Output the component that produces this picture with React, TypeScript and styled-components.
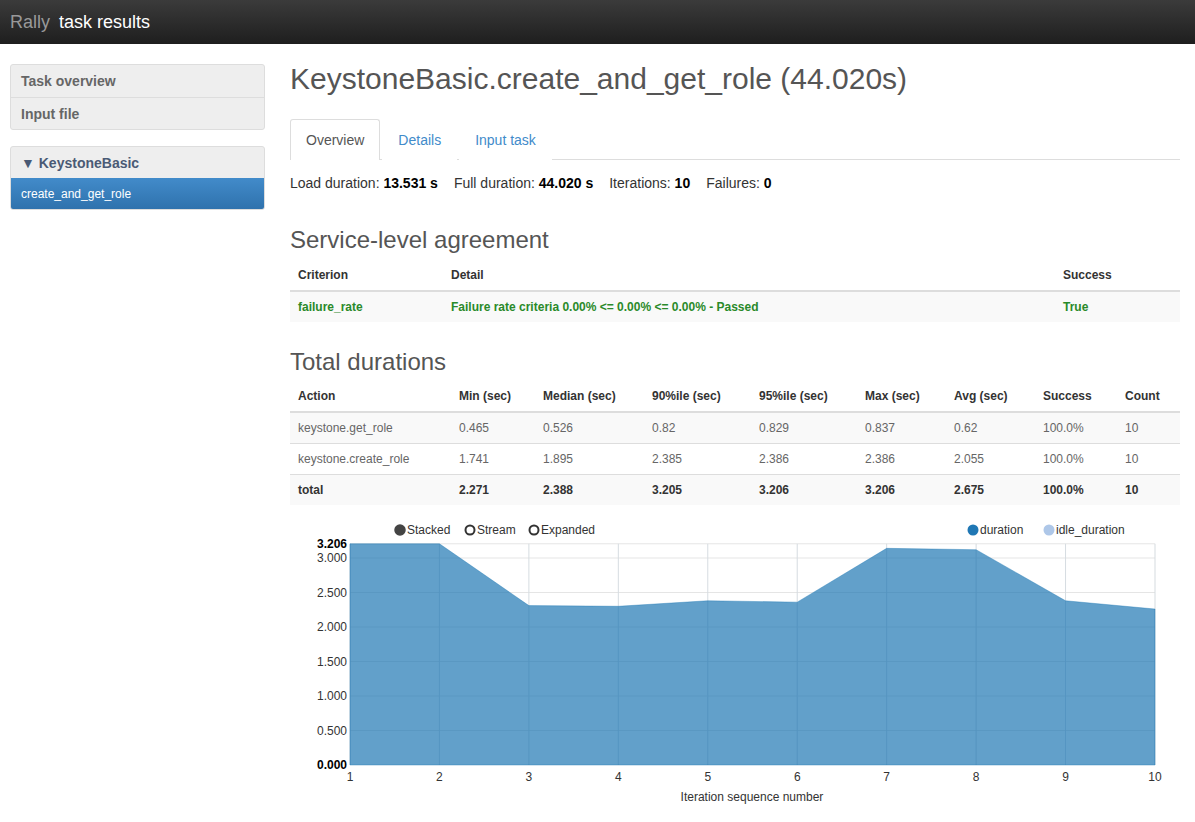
import React from 'react';
import styled, { createGlobalStyle } from 'styled-components';

const GlobalStyle = createGlobalStyle`
  body {
    margin: 0;
    font-family: "Liberation Sans", Arial, sans-serif;
    font-size: 13px;
    color: #333;
    background: #fff;
  }
`;

const TopBar = styled.div`
  height: 44px;
  display: flex;
  align-items: center;
  padding: 0 10px;
  background: linear-gradient(to bottom, #3b3b3b, #1e1e1e);
  font-size: 18px;
`;

const Brand = styled.span`
  color: #999;
  margin-right: 9px;
`;

const BrandTitle = styled.span`
  color: #fff;
`;

const Layout = styled.div`
  display: flex;
  align-items: flex-start;
`;

const Sidebar = styled.div`
  width: 255px;
  margin: 20px 0 0 10px;
  display: flex;
  flex-direction: column;
  gap: 16px;
`;

const MenuPanel = styled.div`
  background: #eee;
  border: 1px solid #ddd;
  border-radius: 3px;
  overflow: hidden;
`;

const MenuItem = styled.div<{ $first?: boolean }>`
  box-sizing: border-box;
  height: 32px;
  display: flex;
  align-items: center;
  padding: 0 10px;
  font-size: 14px;
  font-weight: bold;
  color: #666;
  border-top: ${p => (p.$first ? 'none' : '1px solid #ddd')};
`;

const GroupTitle = styled(MenuItem)`
  height: 31px;
  color: #4a5a75;
`;

const ActiveItem = styled.div`
  height: 31px;
  display: flex;
  align-items: center;
  padding: 0 10px;
  font-size: 12px;
  color: #fff;
  background: linear-gradient(to bottom, #428bca, #2f72ad);
`;

const Main = styled.div`
  width: 890px;
  margin-left: 25px;
`;

const Title = styled.h1`
  margin: 18px 0 23px;
  font-size: 30px;
  line-height: 34px;
  font-weight: normal;
  color: #555;
`;

const Tabs = styled.div`
  display: flex;
  height: 40px;
  border-bottom: 1px solid #ddd;
`;

const Tab = styled.div<{ $active?: boolean }>`
  display: flex;
  align-items: center;
  padding: 0 15px;
  margin-right: 2px;
  font-size: 14px;
  color: ${p => (p.$active ? '#555' : '#428bca')};
  background: #fff;
  border: 1px solid ${p => (p.$active ? '#ddd' : 'transparent')};
  border-bottom: none;
  border-radius: 3px 3px 0 0;
  margin-bottom: -1px;
  height: 41px;
  box-sizing: border-box;
`;

const Summary = styled.div`
  margin-top: 13px;
  font-size: 14px;
  line-height: 20px;
  color: #333;
`;

const SummaryItem = styled.span`
  margin-right: 16px;
  b {
    color: #000;
  }
`;

const Heading = styled.h2<{ $top: number; $bottom: number }>`
  margin: ${p => p.$top}px 0 ${p => p.$bottom}px;
  font-size: 24px;
  line-height: 26px;
  font-weight: normal;
  color: #555;
`;

const Table = styled.table`
  width: 100%;
  border-collapse: collapse;
  table-layout: fixed;
  font-size: 12px;
`;

const Th = styled.th`
  text-align: left;
  font-weight: bold;
  color: #333;
  padding: 6px 8px 7px;
  line-height: 16px;
  border-bottom: 2px solid #ddd;
`;

const Row = styled.tr<{ $striped?: boolean; $bold?: boolean }>`
  background: ${p => (p.$striped ? '#f9f9f9' : '#fff')};
  font-weight: ${p => (p.$bold ? 'bold' : 'normal')};
  td {
    padding: 7px 8px;
    line-height: 16px;
    border-top: 1px solid #ddd;
    color: ${p => (p.$bold ? '#333' : '#666')};
  }
`;

const PassRow = styled.tr`
  background: #f9f9f9;
  td {
    padding: 7px 8px;
    line-height: 16px;
    color: #2a8a2a;
    font-weight: bold;
  }
`;

const ChartBox = styled.div`
  margin-top: 10px;
`;

const durations = [3.206, 3.206, 2.31, 2.3, 2.38, 2.36, 3.14, 3.12, 2.38, 2.26];

const Chart: React.FC = () => {
  const left = 60;
  const right = 865;
  const base = 250;
  const scale = 69;
  const top = base - 3.206 * scale;
  const xs = durations.map((_, i) => left + (i * (right - left)) / 9);
  const ys = durations.map(v => base - v * scale);
  const line = xs.map((x, i) => `${x},${ys[i]}`).join(' L');
  const area = `M${left},${base} L${line} L${right},${base} Z`;
  const ticks = [0.5, 1, 1.5, 2, 2.5, 3];

  return (
    <svg width={890} height={296} fontFamily='"Liberation Sans", Arial, sans-serif' fontSize={12}>
      <g>
        <circle cx={110} cy={15} r={5} fill="#444" stroke="#444" strokeWidth={1.5} />
        <text x={117} y={19} fill="#333">Stacked</text>
        <circle cx={180} cy={15} r={4.5} fill="#fff" stroke="#333" strokeWidth={2} />
        <text x={187} y={19} fill="#333">Stream</text>
        <circle cx={244} cy={15} r={4.5} fill="#fff" stroke="#333" strokeWidth={2} />
        <text x={251} y={19} fill="#333">Expanded</text>
        <circle cx={683} cy={15} r={5.5} fill="#1f77b4" />
        <text x={690} y={19} fill="#333">duration</text>
        <circle cx={759} cy={15} r={5.5} fill="#aec7e8" />
        <text x={766} y={19} fill="#333">idle_duration</text>
      </g>
      {ticks.map(t => (
        <line key={t} x1={left} x2={right} y1={base - t * scale} y2={base - t * scale} stroke="#e5e5e5" />
      ))}
      <line x1={left} x2={right} y1={top} y2={top} stroke="#e5e5e5" />
      {xs.map(x => (
        <line key={x} x1={x} x2={x} y1={top} y2={base} stroke="#e5e5e5" />
      ))}
      <path d={area} fill="#1f77b4" fillOpacity={0.7} stroke="#1f77b4" strokeOpacity={0.4} />
      {xs.map(x => (
        <line key={`v${x}`} x1={x} x2={x} y1={top} y2={base} stroke="#1f77b4" strokeOpacity={0.07} />
      ))}
      {ticks.map(t => (
        <text key={`l${t}`} x={57} y={base - t * scale + 4} textAnchor="end" fill="#333">
          {t.toFixed(3)}
        </text>
      ))}
      <text x={57} y={top + 4} textAnchor="end" fill="#000" fontWeight="bold">3.206</text>
      <text x={57} y={base + 4} textAnchor="end" fill="#000" fontWeight="bold">0.000</text>
      {xs.map((x, i) => (
        <text key={`x${i}`} x={x} y={266} textAnchor="middle" fill="#333">
          {i + 1}
        </text>
      ))}
      <text x={462} y={286} textAnchor="middle" fill="#333">Iteration sequence number</text>
    </svg>
  );
};

const totalCols = [161, 84, 109, 107, 106, 89, 89, 82, 63];
const totalHead = ['Action', 'Min (sec)', 'Median (sec)', '90%ile (sec)', '95%ile (sec)', 'Max (sec)', 'Avg (sec)', 'Success', 'Count'];
const totalRows = [
  ['keystone.get_role', '0.465', '0.526', '0.82', '0.829', '0.837', '0.62', '100.0%', '10'],
  ['keystone.create_role', '1.741', '1.895', '2.385', '2.386', '2.386', '2.055', '100.0%', '10'],
  ['total', '2.271', '2.388', '3.205', '3.206', '3.206', '2.675', '100.0%', '10'],
];

export default function App() {
  return (
    <>
      <GlobalStyle />
      <TopBar>
        <Brand>Rally</Brand>
        <BrandTitle>task results</BrandTitle>
      </TopBar>
      <Layout>
        <Sidebar>
          <MenuPanel>
            <MenuItem $first>Task overview</MenuItem>
            <MenuItem>Input file</MenuItem>
          </MenuPanel>
          <MenuPanel>
            <GroupTitle $first>▼ KeystoneBasic</GroupTitle>
            <ActiveItem>create_and_get_role</ActiveItem>
          </MenuPanel>
        </Sidebar>
        <Main>
          <Title>KeystoneBasic.create_and_get_role (44.020s)</Title>
          <Tabs>
            <Tab $active>Overview</Tab>
            <Tab>Details</Tab>
            <Tab>Input task</Tab>
          </Tabs>
          <Summary>
            <SummaryItem>Load duration: <b>13.531 s</b></SummaryItem>
            <SummaryItem>Full duration: <b>44.020 s</b></SummaryItem>
            <SummaryItem>Iterations: <b>10</b></SummaryItem>
            <SummaryItem>Failures: <b>0</b></SummaryItem>
          </Summary>

          <Heading $top={34} $bottom={8}>Service-level agreement</Heading>
          <Table>
            <colgroup>
              <col style={{ width: 153 }} />
              <col style={{ width: 612 }} />
              <col style={{ width: 125 }} />
            </colgroup>
            <thead>
              <tr>
                <Th>Criterion</Th>
                <Th>Detail</Th>
                <Th>Success</Th>
              </tr>
            </thead>
            <tbody>
              <PassRow>
                <td>failure_rate</td>
                <td>Failure rate criteria 0.00% &lt;= 0.00% &lt;= 0.00% - Passed</td>
                <td>True</td>
              </PassRow>
            </tbody>
          </Table>

          <Heading $top={27} $bottom={7}>Total durations</Heading>
          <Table>
            <colgroup>
              {totalCols.map((w, i) => (
                <col key={i} style={{ width: w }} />
              ))}
            </colgroup>
            <thead>
              <tr>
                {totalHead.map(h => (
                  <Th key={h}>{h}</Th>
                ))}
              </tr>
            </thead>
            <tbody>
              {totalRows.map((r, i) => (
                <Row key={r[0]} $striped={i !== 1} $bold={i === 2}>
                  {r.map((c, j) => (
                    <td key={j}>{c}</td>
                  ))}
                </Row>
              ))}
            </tbody>
          </Table>

          <ChartBox>
            <Chart />
          </ChartBox>
        </Main>
      </Layout>
    </>
  );
}
